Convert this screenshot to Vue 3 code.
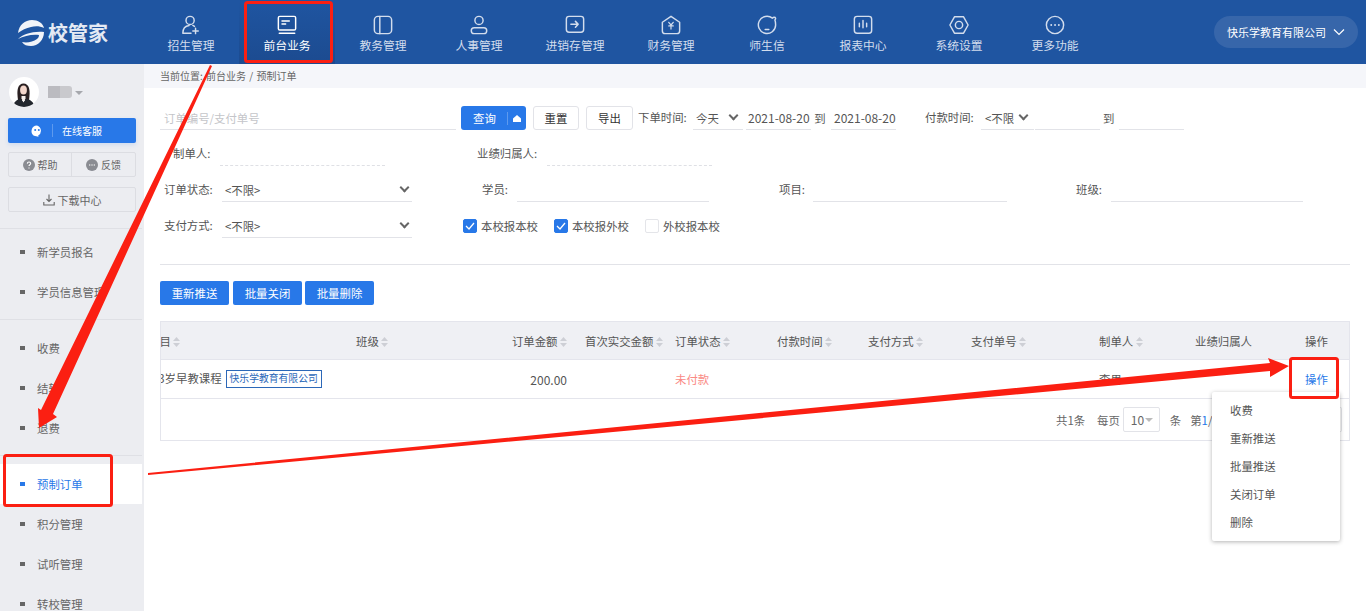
<script setup>
const navItems = [
  { label: '招生管理', icon: 'enroll' },
  { label: '前台业务', icon: 'desk', active: true },
  { label: '教务管理', icon: 'book' },
  { label: '人事管理', icon: 'person' },
  { label: '进销存管理', icon: 'stock' },
  { label: '财务管理', icon: 'finance' },
  { label: '师生信', icon: 'chat' },
  { label: '报表中心', icon: 'report' },
  { label: '系统设置', icon: 'gear' },
  { label: '更多功能', icon: 'more' },
];

const menuGroups = [
  [{ label: '新学员报名' }, { label: '学员信息管理' }],
  [{ label: '收费' }, { label: '结转' }, { label: '退费' }],
  [{ label: '预制订单', active: true }, { label: '积分管理' }, { label: '试听管理' }, { label: '转校管理' }],
];

const columns = [
  { label: '项目', width: 208, sort: true },
  { label: '班级', width: 134, sort: true },
  { label: '订单金额', width: 77, sort: true, right: true },
  { label: '首次实交金额', width: 108, sort: true, pad: true },
  { label: '订单状态', width: 102, sort: true },
  { label: '付款时间', width: 91, sort: true },
  { label: '支付方式', width: 103, sort: true },
  { label: '支付单号', width: 128, sort: true },
  { label: '制单人', width: 96, sort: true },
  { label: '业绩归属人', width: 110 },
  { label: '操作', width: 45 },
];
const gridColumns = columns.map((c) => c.width + 'px').join(' ');

const dropdown = ['收费', '重新推送', '批量推送', '关闭订单', '删除'];
const schools = [
  { label: '本校报本校', checked: true },
  { label: '本校报外校', checked: true },
  { label: '外校报本校', checked: false },
];
</script>

<template>
  <div class="page">
    <header class="topbar">
      <div class="logo">
        <svg width="28" height="26" viewBox="0 0 28 26" fill="#f1f4f9">
          <path d="M1 13C2 5 8 0 15 0c6 0 11 3 12 8-4-2-9-2-13-1-5 1-9 3-13 6z" />
          <path d="M1 19c5-5 15-8 26-7 0 8-6 14-13 14-4 0-7-1-9-4 5 1 11 0 15-3 1-1 2-2 2-4-7-1-15 1-21 4z" />
        </svg>
        <span class="logo-text">校管家</span>
      </div>
      <nav class="nav">
        <a v-for="item in navItems" :key="item.label" class="nav-item" :class="{ active: item.active }">
          <svg class="nav-icon" viewBox="0 0 22 22" fill="none" stroke="currentColor" stroke-width="1.6" stroke-linecap="round" stroke-linejoin="round">
            <template v-if="item.icon === 'enroll'">
              <circle cx="10" cy="6" r="4.5" />
              <path d="M2 20c0-5 3-8 7-8.500M13 11.500c.7.3 1.300.6 1.800 1M2 20h9M16 14.500v6M13 17.500h6" />
            </template>
            <template v-else-if="item.icon === 'desk'">
              <rect x="1.500" y="1.500" width="19" height="15" rx="1.500" />
              <path d="M5.500 6.500h8M5.500 10h4M2.500 20h17" />
            </template>
            <template v-else-if="item.icon === 'book'">
              <rect x="1.500" y="1.500" width="19" height="19" rx="4" />
              <path d="M7.500 1.500v19" />
            </template>
            <template v-else-if="item.icon === 'person'">
              <circle cx="11" cy="6" r="4.500" />
              <rect x="2.500" y="14" width="17" height="6.500" rx="3.200" />
            </template>
            <template v-else-if="item.icon === 'stock'">
              <rect x="1.500" y="1.500" width="19" height="17.500" rx="3" />
              <path d="M6.500 10.200h8M11.500 7l3 3.200-3 3.200" stroke-width="1.700" />
            </template>
            <template v-else-if="item.icon === 'finance'">
              <path d="M11 1.500l9.500 6.500v9.500a3 3 0 0 1-3 3h-13a3 3 0 0 1-3-3V8z" />
              <path d="M8.500 8l2.500 3 2.500-3M8.500 12h5M11 11v4.500" stroke-width="1.300" />
            </template>
            <template v-else-if="item.icon === 'chat'">
              <path d="M17 3.500A9.500 9.500 0 1 0 20.500 11c0-2 0-3.500-.8-5.500C21 4 20.500 2.500 19 2.500c-.8 0-1.500.3-2 1z" />
              <path d="M9 16h4" />
            </template>
            <template v-else-if="item.icon === 'report'">
              <rect x="1.500" y="1.500" width="19" height="18.500" rx="3" />
              <path d="M7 9v4M11 6v8M15 9v4" />
            </template>
            <template v-else-if="item.icon === 'gear'">
              <path d="M6 2h10l5 9-5 9H6l-5-9z" />
              <circle cx="11" cy="11" r="4" />
            </template>
            <template v-else>
              <circle cx="11" cy="11" r="9.500" />
              <path d="M6.800 11h.1M11 11h.1M15.200 11h.1" stroke-width="2" />
            </template>
          </svg>
          <span>{{ item.label }}</span>
        </a>
      </nav>
      <button class="company">
        <span>快乐学教育有限公司</span>
        <svg width="12" height="8" viewBox="0 0 12 8" fill="none" stroke="currentColor" stroke-width="1.200"><path d="M1 1.500l5 5 5-5" /></svg>
      </button>
    </header>

    <div class="body">
      <aside class="sidebar">
        <div class="user">
          <svg class="avatar" viewBox="0 0 30 30">
            <defs>
              <clipPath id="avatar-clip"><circle cx="15" cy="15" r="15" /></clipPath>
            </defs>
            <g clip-path="url(#avatar-clip)">
              <rect width="30" height="30" fill="#fff" />
              <path d="M9 23c-.8-6-.8-9 0-12 .8-3 3-4.500 5.500-4.500s4.700 1.500 5.500 4.500c.8 3 .8 6 0 12z" fill="#2a2022" />
              <ellipse cx="14.500" cy="13" rx="3.400" ry="4.600" fill="#f3d6cb" />
              <path d="M4 30c.5-5 3.500-7 7.500-8.500l3 3.500 3-3.500c4 1.500 7.500 3.500 8 8.500z" fill="#23272e" />
              <path d="M12.500 19h4v2.500l-2 4-2-4z" fill="#f5efec" />
            </g>
          </svg>
          <span class="user-name"><i></i><i></i></span>
          <span class="user-caret"></span>
        </div>
        <button class="service">
          <svg width="12" height="12" viewBox="0 0 12 12" fill="#fff"><path d="M6 .5a5.500 5.500 0 0 0-2 10.600l3.500.7-.3-1.300A5.500 5.500 0 0 0 6 .5z" /><circle cx="4.200" cy="5" r="1" fill="#2878e8" /><circle cx="7.800" cy="5" r="1" fill="#2878e8" /></svg>
          <span class="service-line"></span>
          <span>在线客服</span>
        </button>
        <div class="help-group">
          <a class="help-btn">
            <svg width="12" height="12" viewBox="0 0 12 12"><circle cx="6" cy="6" r="6" fill="#8a8c92" /><path d="M4.300 4.600C4.400 3.500 5.100 3 6 3s1.700.6 1.700 1.500C7.700 5.700 6 5.700 6 7M6 8.600v.8" fill="none" stroke="#fff" stroke-width="1.100" /></svg>
            帮助
          </a>
          <a class="help-btn">
            <svg width="12" height="12" viewBox="0 0 12 12"><circle cx="6" cy="6" r="6" fill="#8a8c92" /><path d="M3 6h1.300M5.350 6h1.300M7.700 6H9" stroke="#fff" stroke-width="1.100" /></svg>
            反馈
          </a>
        </div>
        <a class="download">
          <svg width="12" height="12" viewBox="0 0 12 12" fill="none" stroke="#666" stroke-width="1.100"><path d="M6 .5v7M3.500 5L6 7.500 8.500 5M.8 8v3h10.400V8" /></svg>
          下载中心
        </a>
        <div class="menu">
          <ul v-for="(group, i) in menuGroups" :key="i" class="menu-group">
            <li v-for="m in group" :key="m.label" class="menu-item" :class="{ active: m.active }">
              <i class="dot"></i>{{ m.label }}
            </li>
          </ul>
        </div>
      </aside>

      <main class="main">
        <div class="crumb">当前位置: 前台业务 / 预制订单</div>
        <div class="content">
          <section class="filters">
            <div class="row">
              <span class="ctl ctl-keyword placeholder">订单编号/支付单号</span>
              <span class="btn-query">
                <span>查询</span>
                <svg width="8" height="8" viewBox="0 0 8 8" fill="#fff"><path d="M4 .5L8 4v3.500H0V4z" /></svg>
              </span>
              <span class="btn-plain">重置</span>
              <span class="btn-plain btn-export">导出</span>
              <span class="lbl lbl-order-time">下单时间:</span>
              <span class="ctl ctl-today">今天<i class="chev"></i></span>
              <span class="ctl ctl-date">2021-08-20</span>
              <span class="to">到</span>
              <span class="ctl ctl-date">2021-08-20</span>
              <span class="lbl lbl-pay-time">付款时间:</span>
              <span class="ctl ctl-unlimited">&lt;不限<i class="chev"></i></span>
              <span class="ctl ctl-pay-from"></span>
              <span class="to to-pay">到</span>
              <span class="ctl ctl-pay-to"></span>
            </div>
            <div class="row">
              <span class="lbl lbl-maker">制单人:</span>
              <span class="ctl ctl-dashed"></span>
              <span class="lbl lbl-owner">业绩归属人:</span>
              <span class="ctl ctl-dashed"></span>
            </div>
            <div class="row">
              <span class="lbl lbl-fixed">订单状态:</span>
              <span class="ctl ctl-select">&lt;不限&gt;<i class="chev"></i></span>
              <span class="lbl lbl-student">学员:</span>
              <span class="ctl ctl-student"></span>
              <span class="lbl lbl-project">项目:</span>
              <span class="ctl ctl-project"></span>
              <span class="lbl lbl-class">班级:</span>
              <span class="ctl ctl-class"></span>
            </div>
            <div class="row">
              <span class="lbl lbl-fixed">支付方式:</span>
              <span class="ctl ctl-select">&lt;不限&gt;<i class="chev"></i></span>
              <div class="checks">
                <label v-for="s in schools" :key="s.label" class="check">
                  <span class="box" :class="{ on: s.checked }">
                    <svg v-if="s.checked" width="10" height="8" viewBox="0 0 10 8" fill="none" stroke="#fff" stroke-width="1.300"><path d="M1 4l3 3 5-6" /></svg>
                  </span>
                  {{ s.label }}
                </label>
              </div>
            </div>
          </section>

          <div class="actions">
            <button class="btn-primary">重新推送</button>
            <button class="btn-primary">批量关闭</button>
            <button class="btn-primary">批量删除</button>
          </div>

          <section class="table">
            <div class="table-inner">
              <div class="tr thead" :style="{ gridTemplateColumns: gridColumns }">
                <div v-for="c in columns" :key="c.label" class="th" :class="{ right: c.right, pad: c.pad }">
                  {{ c.label }}
                  <svg v-if="c.sort" class="sort" width="7" height="10" viewBox="0 0 7 10" fill="#cdcfd5"><path d="M3.500 0L7 4H0zM3.500 10L0 6h7z" /></svg>
                </div>
              </div>
              <div class="tr tbody" :style="{ gridTemplateColumns: gridColumns }">
                <div class="td">0-3岁早教课程<span class="tag">快乐学教育有限公司</span></div>
                <div class="td"></div>
                <div class="td right amount">200.00</div>
                <div class="td"></div>
                <div class="td unpaid">未付款</div>
                <div class="td"></div>
                <div class="td"></div>
                <div class="td"></div>
                <div class="td">李男</div>
                <div class="td"></div>
                <div class="td link">操作</div>
              </div>
            </div>
            <div class="pager">
              <span class="pager-total">共1条</span>
              <span class="pager-size">每页</span>
              <span class="size-select">10<i class="size-caret"></i></span>
              <span class="pager-unit">条</span>
              <span class="pager-page">第<b>1</b>/1页</span>
              <span class="go"></span>
            </div>
          </section>
        </div>

        <ul class="dropdown">
          <li v-for="d in dropdown" :key="d">{{ d }}</li>
        </ul>
      </main>
    </div>

    <!-- 标注层：红框和箭头 -->
    <svg class="marks" viewBox="0 0 1366 611" width="1366" height="611">
      <g fill="none" stroke="#fb1f12" stroke-width="3">
        <rect x="245.500" y="2.500" width="86" height="59" rx="2" />
        <rect x="4.500" y="455.500" width="107" height="50" rx="2" />
        <rect x="1290.500" y="358.500" width="47" height="39" rx="2" />
      </g>
      <g fill="#fb1f12">
        <path d="M210 65L212 66 53 414 57 417 39 428 38 408 41 410z" />
        <path d="M148 473L1270 363 1268 358 1289 366 1270 377 1270 371 148 475z" />
      </g>
    </svg>
  </div>
</template>

<style>
html, body {
  margin: 0;
  background: #fff;
}
</style>

<style scoped>
.page {
  position: relative;
  width: 1366px;
  height: 611px;
  overflow: hidden;
  font-family: "Noto Sans CJK SC", "Noto Sans", sans-serif;
  font-size: 11.4px;
  color: #555;
}

.topbar {
  display: flex;
  align-items: stretch;
  height: 64px;
  background: #1f55a1;
  color: #fff;
}

.logo {
  display: flex;
  align-items: center;
  gap: 3px;
  width: 127px;
  padding-left: 16px;
}

.logo svg {
  margin: 1px 0 0 1px;
}

.logo-text {
  margin-top: 2px;
  font-size: 20px;
  font-weight: 700;
  color: #e4eaf4;
  line-height: 1;
}

.nav {
  display: flex;
}

.nav-item {
  display: flex;
  flex-direction: column;
  align-items: center;
  justify-content: flex-start;
  width: 96px;
  padding-top: 15px;
  box-sizing: border-box;
  font-size: 11.800px;
  color: #d3dded;
}

.nav-item.active {
  color: #fff;
  background: linear-gradient(#1f55a1, #1c4b90);
}

.nav-icon {
  width: 20px;
  height: 20px;
  margin-bottom: 1px;
}

.nav-item span {
  line-height: 18px;
}

.company {
  display: flex;
  align-items: center;
  justify-content: space-between;
  width: 144px;
  height: 32px;
  margin: 16px 8px 0 auto;
  padding: 0 13px;
  border: 0;
  border-radius: 16px;
  background: #3766aa;
  color: #fff;
  font: inherit;
  font-size: 11px;
}

.body {
  display: flex;
  height: 547px;
}

.sidebar {
  flex: none;
  width: 144px;
  background: #ecedf1;
}

.user {
  display: flex;
  align-items: center;
  height: 54px;
  padding: 2px 0 0 9px;
  box-sizing: border-box;
}

.avatar {
  width: 30px;
  height: 30px;
}

.user-name {
  display: flex;
  margin-left: 9px;
}

.user-name i {
  width: 12px;
  height: 12px;
  background: #bbbbc0;
}

.user-name i:last-child {
  background: #c9c9cd;
  border-radius: 0 3px 3px 0;
}

.user-caret {
  margin: 2px 0 0 3px;
  border-style: solid;
  border-width: 4px 4px 0;
  border-color: #a6a8ad transparent transparent;
}

.service {
  display: flex;
  align-items: center;
  width: 128px;
  height: 25px;
  margin-left: 8px;
  padding: 0 0 0 23px;
  border: 0;
  border-radius: 2px;
  background: #2878e8;
  box-shadow: 0 2px 4px rgba(40, 120, 232, 0.15);
  color: #fff;
  font: inherit;
  font-size: 10px;
}

.service-line {
  width: 1px;
  height: 13px;
  margin: 0 9px;
  background: rgba(255, 255, 255, 0.25);
}

.help-group {
  display: flex;
  width: 128px;
  height: 25px;
  margin: 9px 0 0 8px;
  border: 1px solid #dcdde2;
  border-radius: 2px;
  box-sizing: border-box;
}

.help-btn {
  display: flex;
  flex: 1;
  align-items: center;
  justify-content: center;
  gap: 3px;
  font-size: 10px;
  color: #666;
}

.help-btn + .help-btn {
  flex: 0 0 63px;
  border-left: 1px solid #dcdde2;
}

.download {
  display: flex;
  align-items: center;
  justify-content: center;
  gap: 3px;
  width: 128px;
  height: 25px;
  margin: 10px 0 0 8px;
  border: 1px solid #dcdde2;
  border-radius: 2px;
  box-sizing: border-box;
  font-size: 11px;
  color: #666;
}

.menu {
  width: 142px;
  margin-top: 16px;
}

.menu-group {
  margin: 0;
  padding: 3px 0 7px;
  list-style: none;
  border-top: 1px solid #dfe0e5;
}

.menu-group + .menu-group {
  padding: 8px 0 7px;
}

.menu-item {
  display: flex;
  align-items: center;
  height: 40px;
  padding-left: 20px;
  color: #666;
}

.menu-item.active {
  background: #fff;
  color: #2878e8;
}

.dot {
  width: 5px;
  height: 4px;
  margin-right: 12px;
  background: #666;
}

.active .dot {
  background: #2878e8;
}

.main {
  position: relative;
  flex: 1;
  min-width: 0;
}

.crumb {
  height: 24px;
  padding-left: 16px;
  background: #f5f6fa;
  font-size: 10px;
  word-spacing: 1px;
  line-height: 23px;
  color: #666;
}

.content {
  padding: 12px 16px 0;
}

.filters {
  padding-bottom: 20px;
  border-bottom: 1px solid #e2e3e8;
}

.row {
  display: flex;
  align-items: center;
  height: 36px;
  white-space: nowrap;
}

.lbl {
  flex: none;
  margin-top: -2px;
  color: #555;
}

.ctl {
  position: relative;
  display: block;
  flex: none;
  height: 24px;
  border-bottom: 1px solid #e2e3e8;
  box-sizing: border-box;
  line-height: 24px;
  color: #555;
}

.placeholder {
  color: #c4c5c9;
  padding-left: 4px;
}

.ctl-keyword { width: 296px; }

.chev {
  position: absolute;
  top: 6px;
  right: 6px;
  width: 5px;
  height: 5px;
  border-right: 2px solid #666;
  border-bottom: 2px solid #666;
  transform: rotate(45deg);
}

.btn-query {
  display: flex;
  flex: none;
  align-items: center;
  width: 65px;
  height: 24px;
  margin-left: 5px;
  padding-left: 12px;
  border-radius: 3px;
  box-sizing: border-box;
  background: #2878e8;
  color: #fff;
}

.btn-query svg {
  margin-left: 11px;
  padding-left: 5px;
  border-left: 1px solid rgba(255, 255, 255, 0.25);
  box-sizing: content-box;
  height: 13px;
}

.btn-plain {
  flex: none;
  width: 46px;
  height: 24px;
  margin-left: 7px;
  border: 1px solid #e2e3e8;
  border-radius: 3px;
  box-sizing: border-box;
  text-align: center;
  line-height: 23px;
  color: #333;
}

.btn-export { width: 47px; }

.lbl-order-time {
  width: 55px;
  margin-left: 5px;
}

.ctl-today {
  width: 50px;
  padding-left: 3px;
}

.ctl-date {
  width: 65px;
  margin-left: 3px;
  padding-left: 2px;
  font-size: 12px;
}

.to {
  flex: none;
  width: 20px;
  padding-right: 2px;
  box-sizing: border-box;
  text-align: center;
}

.to + .ctl-date {
  margin-left: 0;
  padding-left: 3px;
}

.lbl-pay-time {
  width: 56px;
  margin-left: 29px;
}

.ctl-unlimited {
  width: 53px;
  padding-left: 4px;
}

.ctl-unlimited .chev { right: 7px; }

.ctl-pay-from {
  width: 65px;
  margin-left: 1px;
}

.to-pay {
  width: 16px;
  margin-left: 3px;
  padding-right: 0;
  text-align: left;
}

.ctl-pay-to { width: 65px; }

.lbl-maker {
  width: 47px;
  margin-left: 13px;
}

.ctl-dashed {
  width: 165px;
  border-bottom: 1px dashed #dfe0e5;
}

.lbl-owner {
  width: 70px;
  margin-left: 92px;
}

.lbl-fixed {
  width: 62px;
  padding-left: 4px;
  box-sizing: border-box;
}

.ctl-select {
  width: 190px;
  padding-left: 3px;
}

.ctl-select .chev { right: 4px; }

.lbl-student { margin-left: 70px; width: 35px; }
.ctl-student { width: 192px; }
.lbl-project { margin-left: 70px; width: 34px; }
.ctl-project { width: 194px; }
.lbl-class { margin-left: 69px; width: 35px; }
.ctl-class { width: 192px; }

.checks {
  display: flex;
  gap: 16px;
  margin-left: 51px;
}

.check {
  display: flex;
  align-items: center;
  gap: 4px;
}

.box {
  display: flex;
  align-items: center;
  justify-content: center;
  width: 14px;
  height: 14px;
  border: 1px solid #e4e5e9;
  border-radius: 2px;
  box-sizing: border-box;
}

.box.on {
  border-color: #2878e8;
  background: #2878e8;
}

.actions {
  display: flex;
  gap: 3px;
  margin-top: 16px;
}

.btn-primary {
  width: 69px;
  height: 24px;
  padding: 0;
  border: 0;
  border-radius: 2px;
  background: #2878e8;
  color: #fff;
  font: inherit;
}

.btn-primary:first-child {
  margin-right: 1px;
}

.table {
  height: 120px;
  margin-top: 16px;
  border: 1px solid #e4e5ec;
  box-sizing: border-box;
  overflow: hidden;
}

.table-inner {
  margin-left: -13px;
}

.tr {
  display: grid;
  align-items: center;
}

.thead {
  height: 37px;
  background: #eff0f4;
  border-bottom: 1px solid #e4e5ec;
}

.th {
  white-space: nowrap;
  color: #555;
}

.sort {
  vertical-align: -1px;
}

.right { text-align: right; }
.pad { padding-left: 18px; }

.tbody {
  height: 38px;
  border-bottom: 1px solid #e4e5ec;
}

.td {
  white-space: nowrap;
  color: #555;
}

.amount { font-size: 12px; }

.unpaid { color: #fa8a85; }

.link { color: #2878e8; }

.tag {
  display: inline-block;
  height: 16px;
  margin-left: 4px;
  padding: 0 3px;
  border: 1px solid #2c68b8;
  font-size: 9.800px;
  line-height: 14px;
  color: #2c68b8;
  vertical-align: middle;
}

.pager {
  display: flex;
  align-items: center;
  height: 41px;
  padding: 0 7px 0 895px;
  color: #666;
}

.pager-total { width: 32px; }

.pager-size { margin-left: 9px; }

.size-select {
  position: relative;
  flex: none;
  width: 37px;
  height: 25px;
  margin-left: 3px;
  padding-left: 7px;
  border: 1px solid #e2e3e8;
  border-radius: 2px;
  box-sizing: border-box;
  font-size: 12px;
  line-height: 23px;
}

.size-caret {
  position: absolute;
  top: 10px;
  right: 6px;
  border-style: solid;
  border-width: 4px 4px 0;
  border-color: #bbb transparent transparent;
}

.pager-unit { margin-left: 10px; }

.pager-page {
  flex: 1;
  margin-left: 9px;
}

.pager-page b {
  font-weight: 400;
  color: #2878e8;
}

.go {
  width: 10px;
  height: 25px;
  border: 1px solid #e2e3e8;
  border-left: 0;
  border-radius: 0 2px 2px 0;
  box-sizing: border-box;
}

.dropdown {
  position: absolute;
  top: 328px;
  left: 1068px;
  width: 128px;
  margin: 0;
  padding: 4px 0 5px;
  list-style: none;
  background: #fff;
  box-shadow: 0 1px 4px rgba(0, 0, 0, 0.3);
  border-radius: 2px;
}

.dropdown li {
  height: 28px;
  padding-left: 18px;
  line-height: 28px;
  color: #555;
}

.marks {
  position: absolute;
  top: 0;
  left: 0;
  pointer-events: none;
}
</style>
